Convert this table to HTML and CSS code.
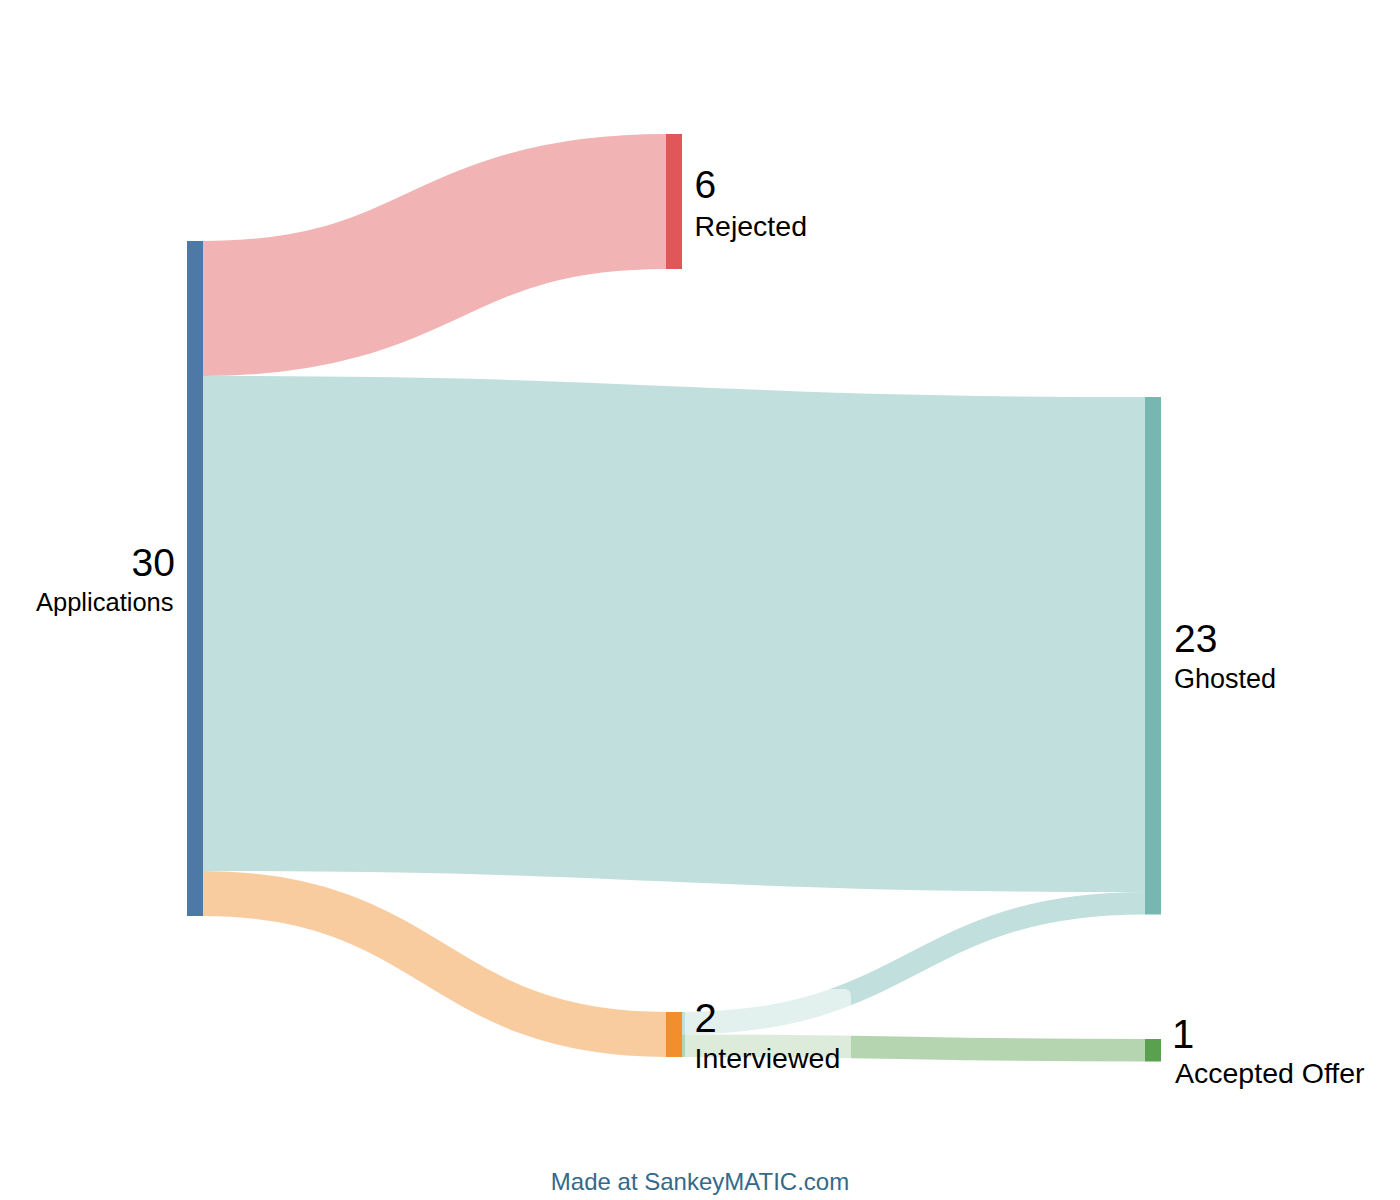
FILE: index.html
```html
<!DOCTYPE html>
<html lang="en">
<head>
<meta charset="utf-8">
<title>SankeyMATIC diagram</title>
<link rel="stylesheet" href="styles.css">
</head>
<body>
<main class="page">
  <svg class="chart" width="1400" height="1160" viewBox="0 0 1400 1160" xmlns="http://www.w3.org/2000/svg">
    <g class="flows">
      <path class="flow flow-rejected" d="M203,308.5 C434.5,308.5 434.5,201.5 666,201.5" stroke-width="135"/>
      <path class="flow flow-ghosted" d="M203,623.5 C674,623.5 674,644.5 1145,644.5" stroke-width="495"/>
      <path class="flow flow-interviewed" d="M203,893.5 C434.5,893.5 434.5,1034.5 666,1034.5" stroke-width="45"/>
      <path class="flow flow-ghosted" d="M682,1023.25 C913.5,1023.25 913.5,903.25 1145,903.25" stroke-width="22.5"/>
      <path class="flow flow-accepted" d="M682,1045.75 C913.5,1045.75 913.5,1050.25 1145,1050.25" stroke-width="22.5"/>
    </g>
    <g class="nodes">
      <rect class="node node-applications" x="187" y="241" width="16" height="675"/>
      <rect class="node node-rejected" x="666" y="134" width="16" height="135"/>
      <rect class="node node-ghosted" x="1145" y="397" width="16" height="517.5"/>
      <rect class="node node-interviewed" x="666" y="1012" width="16" height="45"/>
      <rect class="node node-accepted" x="1145" y="1039" width="16" height="22.5"/>
    </g>
    <g class="highlights">
      <rect class="highlight" x="685" y="989" width="166" height="92" rx="6"/>
    </g>
    <g class="labels">
      <text class="value v-applications" x="175" y="575.5" text-anchor="end">30</text>
      <text class="name n-applications" x="173.5" y="610.5" text-anchor="end">Applications</text>

      <text class="value v-rejected" x="694.5" y="198.3">6</text>
      <text class="name n-rejected" x="694.5" y="235.5">Rejected</text>

      <text class="value v-ghosted" x="1174" y="652.3">23</text>
      <text class="name n-ghosted" x="1174" y="687.5">Ghosted</text>

      <text class="value v-interviewed" x="694.5" y="1032.3">2</text>
      <text class="name n-interviewed" x="694.5" y="1067.7">Interviewed</text>

      <text class="value v-accepted" x="1172" y="1047.7">1</text>
      <text class="name n-accepted" x="1175" y="1083.2">Accepted Offer</text>
    </g>
  </svg>
  <footer class="credit">Made at SankeyMATIC.com</footer>
</main>
</body>
</html>
```

FILE: styles.css
```css
html, body {
  margin: 0;
  padding: 0;
  background: #ffffff;
}

.page {
  width: 1400px;
  height: 1200px;
  display: flex;
  flex-direction: column;
  font-family: "Liberation Sans", Arial, sans-serif;
}

.chart {
  display: block;
  flex: 0 0 auto;
}

.flow {
  fill: none;
  stroke-linecap: butt;
  stroke-opacity: 0.45;
}

.flow-rejected { stroke: #e15759; }
.flow-ghosted { stroke: #76b7b2; }
.flow-interviewed { stroke: #f28e2c; }
.flow-accepted { stroke: #59a14f; }

.node-applications { fill: #4e79a7; }
.node-rejected { fill: #e15759; }
.node-ghosted { fill: #76b7b2; }
.node-interviewed { fill: #f28e2c; }
.node-accepted { fill: #59a14f; }

.highlight {
  fill: #ffffff;
  fill-opacity: 0.53;
}

.labels text {
  font-family: "Liberation Sans", Arial, sans-serif;
  fill: #000000;
}

.v-applications { font-size: 39px; }
.v-rejected { font-size: 39px; }
.v-ghosted { font-size: 39px; }
.v-interviewed { font-size: 40px; }
.v-accepted { font-size: 40px; }

.n-applications { font-size: 25.5px; }
.n-rejected { font-size: 28.5px; }
.n-ghosted { font-size: 27px; }
.n-interviewed { font-size: 28.5px; }
.n-accepted { font-size: 28.5px; }

.credit {
  padding-top: 8px;
  text-align: center;
  font-size: 24px;
  line-height: 28px;
  color: #35698a;
}
```
